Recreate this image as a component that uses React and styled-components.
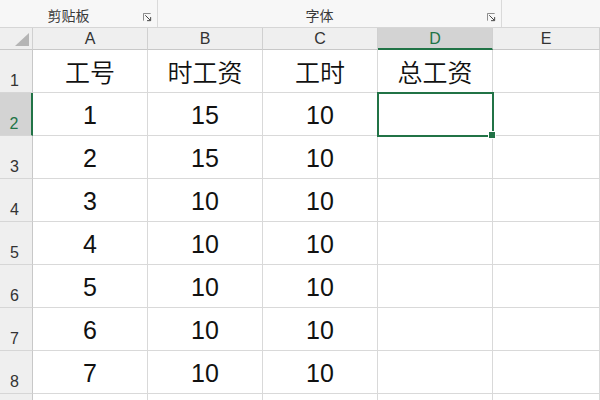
import React from "react";
import styled, { createGlobalStyle } from "styled-components";

const GlobalStyle = createGlobalStyle`
  html, body {
    margin: 0;
    padding: 0;
    background: #ffffff;
    overflow: hidden;
  }
  body {
    font-family: "Liberation Sans", "Noto Sans CJK SC", sans-serif;
  }
`;

const rows = [
  ["工号", "时工资", "工时", "总工资"],
  ["1", "15", "10", ""],
  ["2", "15", "10", ""],
  ["3", "10", "10", ""],
  ["4", "10", "10", ""],
  ["5", "10", "10", ""],
  ["6", "10", "10", ""],
  ["7", "10", "10", ""],
  ["", "", "", ""],
];

const columns = ["A", "B", "C", "D", "E"];
const activeCol = 3;
const activeRow = 2;
const visibleRows = 8;

function Launcher() {
  return (
    <LauncherIcon viewBox="0 0 10 10">
      <path d="M0.5 8.5 V0.5 H8.5" fill="none" stroke="#7a7a7a" strokeWidth="1" />
      <path d="M2.5 2.5 L8 8" fill="none" stroke="#444" strokeWidth="1.1" />
      <path d="M8.5 4.5 V8.5 H4.5" fill="none" stroke="#444" strokeWidth="1.1" />
    </LauncherIcon>
  );
}

function App() {
  return (
    <Page>
      <GlobalStyle />
      <Ribbon>
        <Group $width={158}>
          <GroupLabel $shift={-10}>剪贴板</GroupLabel>
          <Launcher />
        </Group>
        <Group $width={344}>
          <GroupLabel $shift={-10}>字体</GroupLabel>
          <Launcher />
        </Group>
        <Group $width={null} />
      </Ribbon>
      <Sheet>
        <Corner>
          <CornerTriangle />
        </Corner>
        {columns.map((c, i) => (
          <ColHeader key={c} $active={i === activeCol}>
            {c}
          </ColHeader>
        ))}
        {rows.map((r, ri) => {
          const rowNum = ri + 1;
          return (
            <React.Fragment key={ri}>
              <RowHeader $active={rowNum === activeRow}>
                {rowNum <= visibleRows ? rowNum : ""}
              </RowHeader>
              {r.map((v, ci) => (
                <Cell
                  key={ci}
                  $cjk={ri === 0}
                  $selected={rowNum === activeRow && ci === activeCol}
                >
                  {v}
                  {rowNum === activeRow && ci === activeCol && <FillHandle />}
                </Cell>
              ))}
              <Cell />
            </React.Fragment>
          );
        })}
      </Sheet>
    </Page>
  );
}

export default App;

const Page = styled.div`
  width: 600px;
  height: 400px;
  overflow: hidden;
  background: #ffffff;
`;

const Ribbon = styled.div`
  display: flex;
  height: 27px;
  background: #f7f7f7;
  border-bottom: 1px solid #d6d6d6;
`;

const Group = styled.div`
  position: relative;
  display: flex;
  align-items: center;
  justify-content: center;
  box-sizing: border-box;
  width: ${(p) => (p.$width ? `${p.$width}px` : "auto")};
  flex: ${(p) => (p.$width ? "none" : "1")};
  height: 100%;
  border-right: ${(p) => (p.$width ? "1px solid #dadada" : "none")};
`;

const GroupLabel = styled.span`
  font-family: "Noto Sans CJK SC", sans-serif;
  font-size: 14px;
  color: #3a3a3a;
  margin-top: 3px;
  transform: translateX(${(p) => p.$shift}px);
`;

const LauncherIcon = styled.svg`
  position: absolute;
  right: 5px;
  bottom: 5px;
  width: 9px;
  height: 9px;
`;

const Sheet = styled.div`
  display: grid;
  grid-template-columns: 33px 115px 115px 115px 115px 1fr;
  grid-template-rows: 22px repeat(9, 43px);
`;

const Corner = styled.div`
  position: relative;
  box-sizing: border-box;
  background: #efefef;
  border-right: 1px solid #d0d0d0;
  border-bottom: 1px solid #c8c8c8;
`;

const CornerTriangle = styled.div`
  position: absolute;
  right: 3px;
  bottom: 3px;
  width: 0;
  height: 0;
  border-left: 14px solid transparent;
  border-bottom: 13px solid #b5b5b5;
`;

const ColHeader = styled.div`
  box-sizing: border-box;
  display: flex;
  align-items: center;
  justify-content: center;
  font-family: "Liberation Sans", "Noto Sans", sans-serif;
  font-size: 16px;
  color: ${(p) => (p.$active ? "#217346" : "#333333")};
  background: ${(p) => (p.$active ? "#d3d3d3" : "#efefef")};
  border-right: 1px solid #d0d0d0;
  border-bottom: ${(p) => (p.$active ? "2px solid #217346" : "1px solid #c8c8c8")};
  padding-top: ${(p) => (p.$active ? "1px" : "0")};
`;

const RowHeader = styled.div`
  box-sizing: border-box;
  display: flex;
  align-items: flex-end;
  justify-content: center;
  padding-bottom: 2px;
  padding-right: 3px;
  font-family: "Liberation Sans", "Noto Sans", sans-serif;
  font-size: 16px;
  color: ${(p) => (p.$active ? "#217346" : "#333333")};
  background: ${(p) => (p.$active ? "#d3d3d3" : "#efefef")};
  border-right: ${(p) => (p.$active ? "2px solid #217346" : "1px solid #c8c8c8")};
  border-bottom: 1px solid #d6d6d6;
`;

const Cell = styled.div`
  position: relative;
  box-sizing: border-box;
  display: flex;
  align-items: flex-end;
  justify-content: center;
  padding-bottom: ${(p) => (p.$cjk ? "8px" : "7px")};
  font-family: ${(p) =>
    p.$cjk
      ? '"Noto Sans CJK SC", sans-serif'
      : '"Liberation Sans", "Noto Sans CJK SC", sans-serif'};
  font-size: 25px;
  font-weight: ${(p) => (p.$cjk ? 350 : 400)};
  line-height: 1;
  color: #111111;
  border-right: 1px solid #d9d9d9;
  border-bottom: 1px solid #d9d9d9;
  outline: ${(p) => (p.$selected ? "2px solid #217346" : "none")};
  outline-offset: -1px;
  z-index: ${(p) => (p.$selected ? 1 : 0)};
`;

const FillHandle = styled.span`
  position: absolute;
  right: -4px;
  bottom: -4px;
  width: 6px;
  height: 6px;
  background: #217346;
  border: 1px solid #ffffff;
`;
